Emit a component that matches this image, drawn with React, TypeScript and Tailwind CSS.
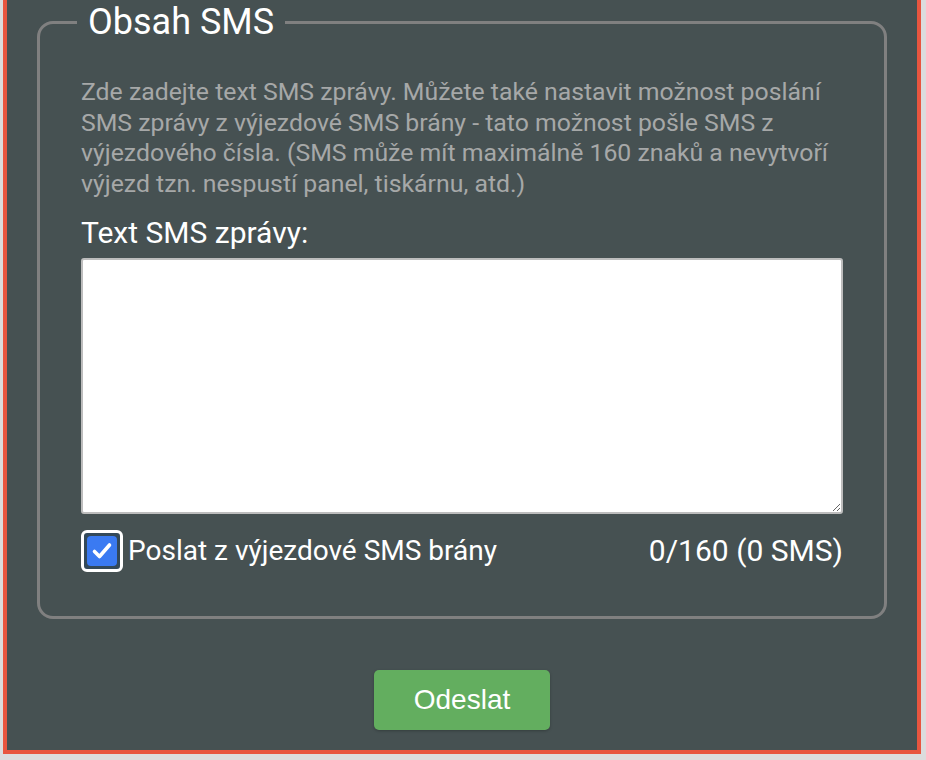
import React, { useState } from 'react';

/*
 * SMS composer panel: fieldset with description, message textarea,
 * gateway checkbox + char counter, and a submit button below.
 */

const MAX = 160;

export default function App() {
  const [text, setText] = useState('');
  const [gateway, setGateway] = useState(true);

  const count = text.length;
  const parts = count === 0 ? 0 : Math.ceil(count / MAX);

  return (
    <div className="min-h-screen bg-[#dcdcdd] pl-[3px] pr-[5px] pb-[6px] font-['Roboto',sans-serif]">
      <div className="border-x-4 border-b-4 border-[#e8553f] bg-[#465152] px-[30px] pb-[20px]">
        <fieldset className="rounded-[16px] border-[3px] border-[#808080] px-[41px] pb-[44px] pt-[33px]">
          <legend className="-ml-[4px] px-[11px] text-[36px] leading-[44px] text-white">Obsah SMS</legend>

          <p className="text-[24.8px] leading-[30.7px] text-[#a6a8a8]">
            Zde zadejte text SMS zprávy. Můžete také nastavit možnost poslání SMS zprávy z výjezdové SMS
            brány - tato možnost pošle SMS z výjezdového čísla. (SMS může mít maximálně 160 znaků a
            nevytvoří výjezd tzn. nespustí panel, tiskárnu, atd.)
          </p>

          <label className="mt-[15px] block text-[30px] leading-[36px] text-white" htmlFor="sms-text">
            Text SMS zprávy:
          </label>
          <textarea
            id="sms-text"
            value={text}
            maxLength={MAX}
            onChange={(e) => setText(e.target.value)}
            className="mt-[7px] block h-[256px] w-full rounded-[3px] border-2 border-[#bdbdbd] bg-white p-2 text-[20px] text-black outline-none"
          />

          <div className="mt-[16px] flex items-center justify-between">
            <label className="flex cursor-pointer items-center gap-[5px] text-[28px] leading-[42px] text-white">
              <span className="flex h-[42px] w-[42px] items-center justify-center rounded-[6px] border-[3px] border-white bg-[#33495a]">
                <input
                  type="checkbox"
                  checked={gateway}
                  onChange={(e) => setGateway(e.target.checked)}
                  className="sr-only"
                />
                <span className="flex h-[30px] w-[30px] items-center justify-center rounded-[4px] bg-[#3a7af2]">
                  {gateway && (
                    <svg viewBox="0 0 24 24" className="h-[24px] w-[24px]" fill="none" stroke="white" strokeWidth="3.6" strokeLinecap="round" strokeLinejoin="round">
                      <path d="M4.5 12.5l5 5L19.5 6" />
                    </svg>
                  )}
                </span>
              </span>
              Poslat z výjezdové SMS brány
            </label>
            <span className="text-[30px] leading-[42px] text-white">
              {count}/{MAX} ({parts} SMS)
            </span>
          </div>
        </fieldset>

        <div className="mt-[51px] flex justify-center">
          <button
            type="button"
            className="h-[60px] w-[176px] rounded-[5px] bg-[#63ae5f] font-['Liberation_Sans',Arial,sans-serif] text-[28px] text-white shadow-[0_1px_3px_rgba(0,0,0,0.25)]"
          >
            Odeslat
          </button>
        </div>
      </div>
    </div>
  );
}
